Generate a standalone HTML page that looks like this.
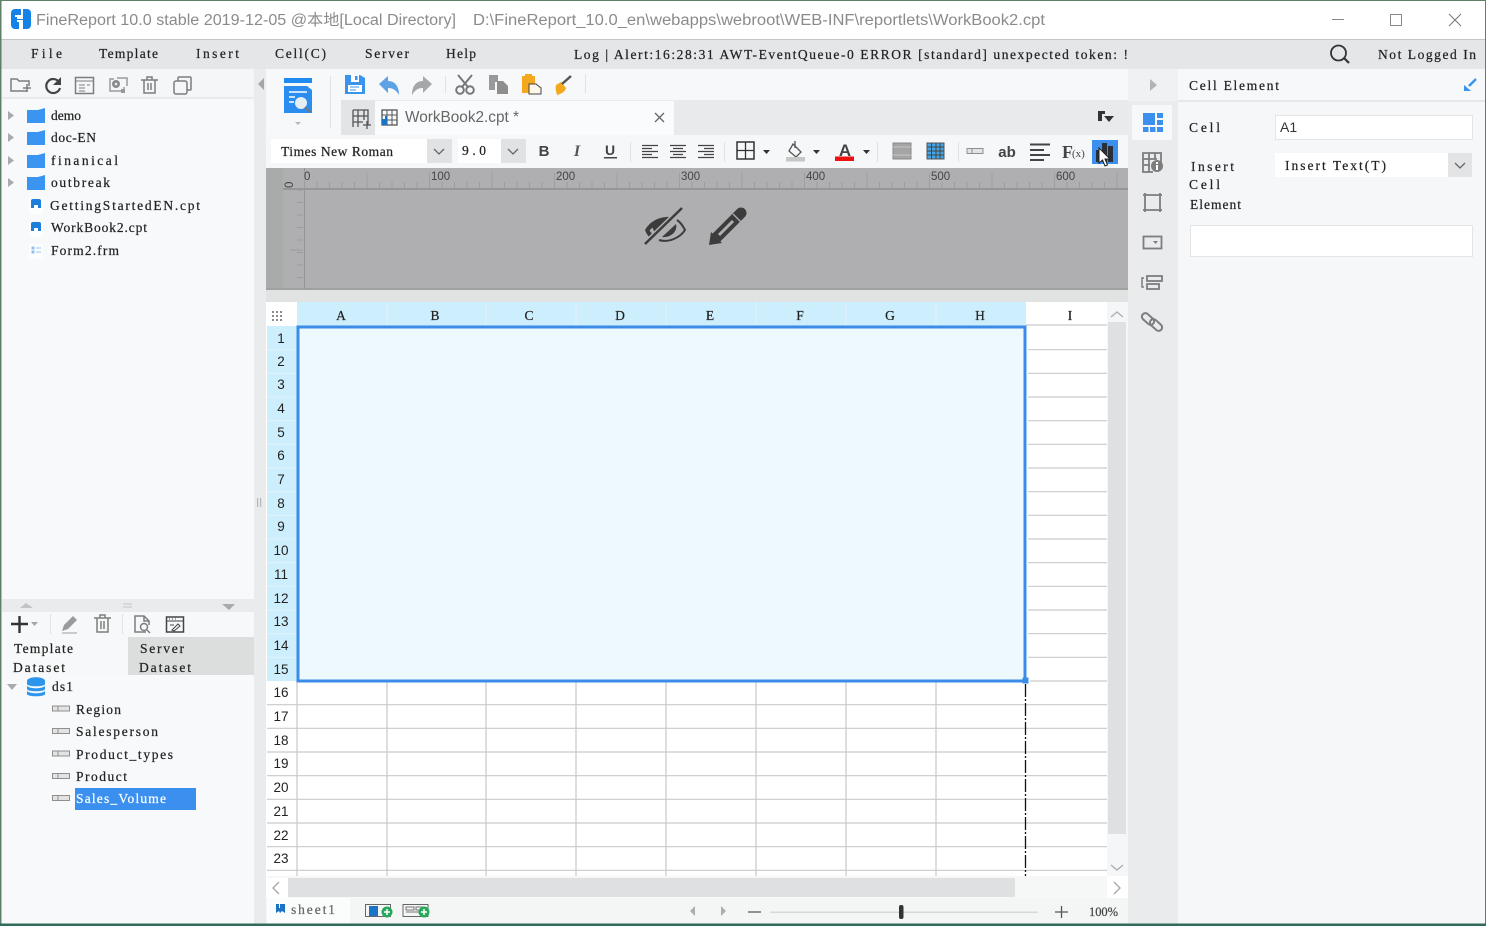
<!DOCTYPE html>
<html><head><meta charset="utf-8"><title>FineReport</title>
<style>
html,body{margin:0;padding:0;background:#fff;overflow:hidden}
svg{display:block}
text{font-family:"Liberation Serif","Noto Sans CJK SC",serif;font-size:13.5px;fill:#222;stroke:#222;stroke-width:.22px}
.s{font-family:"Liberation Sans","Noto Sans CJK SC",sans-serif;stroke:none}
.t{font-size:15.5px;fill:#8b8b8b}
.n{font-size:13.5px;fill:#222}
.r{font-size:11.5px;fill:#444}
.i{fill:none;stroke:#7d7d7d;stroke-width:1.5}
.d{fill:none;stroke:#444;stroke-width:1.5}
.g{stroke:#c9c9cc;stroke-width:1.2}
</style></head><body>
<svg width="1486" height="926" viewBox="0 0 1486 926" xmlns="http://www.w3.org/2000/svg">
<rect width="1486" height="926" fill="#fff"/>
<!-- menu -->
<rect x="1" y="39" width="1484" height="30" fill="#e5e6e8"/>
<rect x="1" y="39" width="1484" height="1" fill="#c4c5c6"/>
<!-- left panel -->
<rect x="2" y="69" width="252" height="856" fill="#f7f9fa"/>
<rect x="2" y="69" width="252" height="29" fill="#f5f6f8"/>
<rect x="2" y="97" width="252" height="2" fill="#e8e9ea"/>
<rect x="254" y="69" width="12" height="856" fill="#eaebed"/>
<!-- center -->
<rect x="266" y="69" width="862" height="31" fill="#f7f8fa"/>
<rect x="266" y="100" width="862" height="35" fill="#f7f8fa"/>
<rect x="341" y="100" width="787" height="35" fill="#e9eaec"/>
<rect x="341" y="100" width="34" height="35" fill="#e3e4e6"/>
<rect x="375" y="101" width="299" height="34" fill="#fafbfc"/>
<rect x="266" y="135" width="862" height="33" fill="#f6f7f9"/>
<rect x="266" y="168" width="862" height="121" fill="#afafb1"/>
<rect x="266" y="168" width="17" height="121" fill="#a9aaaa"/>
<rect x="266" y="288" width="862" height="2" fill="#a0a0a0"/>
<rect x="266" y="290" width="862" height="12" fill="#e1e2e2"/>
<rect x="304" y="168" width="1" height="121" fill="#959596"/>
<rect x="283" y="188" width="845" height="2" fill="#969697"/>
<!-- ruler ticks -->
<line x1="304" y1="185" x2="1128" y2="185" stroke="#9c9c9d" stroke-width="6" stroke-dasharray="1 11.5"/>
<line x1="304" y1="178" x2="1128" y2="178" stroke="#9f9fa0" stroke-width="10" stroke-dasharray="1 61.5"/>
<line x1="300" y1="190" x2="300" y2="288" stroke="#9c9c9d" stroke-width="6" stroke-dasharray="1 11.5" stroke-dashoffset="-12"/>
<line x1="290" y1="250" x2="303" y2="250" stroke="#9c9c9d" stroke-width="1"/>
<text x="304" y="180" class="s r">0</text><text x="431" y="180" class="s r">100</text><text x="556" y="180" class="s r">200</text><text x="681" y="180" class="s r">300</text><text x="806" y="180" class="s r">400</text><text x="931" y="180" class="s r">500</text><text x="1056" y="180" class="s r">600</text>
<text transform="translate(285,188) rotate(-90)" x="0" y="8" class="s r">0</text>
<!-- grid -->
<rect x="267" y="302" width="840" height="574" fill="#fff"/>
<rect x="297" y="302" width="729" height="24" fill="#cdeefc"/>
<rect x="267" y="326" width="30" height="355" fill="#cdeefc"/>
<rect x="297" y="326" width="729" height="355" fill="#eef9fe"/>
<g stroke="#e2f3fb" stroke-width="1"><path d="M387 302V326M486 302V326M576 302V326M666 302V326M756 302V326M846 302V326M936 302V326"/><path d="M267 349.7H297M267 373.3H297M267 397H297M267 420.7H297M267 444.3H297M267 468H297M267 491.7H297M267 515.3H297M267 539H297M267 562.7H297M267 586.3H297M267 610H297M267 633.7H297M267 657.3H297"/></g>
<path class="g" fill="none" d="M1028 349.7H1107M1028 373.3H1107M1028 397H1107M1028 420.7H1107M1028 444.3H1107M1028 468H1107M1028 491.7H1107M1028 515.3H1107M1028 539H1107M1028 562.7H1107M1028 586.3H1107M1028 610H1107M1028 633.7H1107M1028 657.3H1107M1026 325H1107"/>
<path class="g" fill="none" d="M267 704.7H1107M267 728.3H1107M267 752H1107M267 775.7H1107M267 799.3H1107M267 823H1107M267 846.7H1107M267 870.3H1107M1030 681H1107"/>
<path class="g" fill="none" d="M297 681V876M387 681V876M486 681V876M576 681V876M666 681V876M756 681V876M846 681V876M936 681V876"/>
<rect x="298" y="327" width="727" height="354" fill="none" stroke="#3a8ce8" stroke-width="3"/>
<rect x="1022.500" y="677.500" width="6" height="6" fill="#3a8ce8"/>
<line x1="1025.500" y1="684" x2="1025.500" y2="876" stroke="#111" stroke-width="1.300" stroke-dasharray="13 2 2 2"/>
<!-- corner dots -->
<g fill="#8c8c8c"><rect x="272" y="311" width="2" height="2"/><rect x="276" y="311" width="2" height="2"/><rect x="280" y="311" width="2" height="2"/><rect x="272" y="315" width="2" height="2"/><rect x="276" y="315" width="2" height="2"/><rect x="280" y="315" width="2" height="2"/><rect x="272" y="319" width="2" height="2"/><rect x="276" y="319" width="2" height="2"/><rect x="280" y="319" width="2" height="2"/></g>
<g text-anchor="middle">
<text x="341" y="320">A</text><text x="435" y="320">B</text><text x="529" y="320">C</text><text x="620" y="320">D</text><text x="710" y="320">E</text><text x="800" y="320">F</text><text x="890" y="320">G</text><text x="980" y="320">H</text><text x="1070" y="320">I</text>
<text class="s n" x="281" y="343">1</text><text class="s n" x="281" y="366">2</text><text class="s n" x="281" y="389">3</text><text class="s n" x="281" y="413">4</text><text class="s n" x="281" y="437">5</text><text class="s n" x="281" y="460">6</text><text class="s n" x="281" y="484">7</text><text class="s n" x="281" y="508">8</text><text class="s n" x="281" y="531">9</text><text class="s n" x="281" y="555">10</text><text class="s n" x="281" y="579">11</text><text class="s n" x="281" y="603">12</text><text class="s n" x="281" y="626">13</text><text class="s n" x="281" y="650">14</text><text class="s n" x="281" y="674">15</text><text class="s n" x="281" y="697">16</text><text class="s n" x="281" y="721">17</text><text class="s n" x="281" y="745">18</text><text class="s n" x="281" y="768">19</text><text class="s n" x="281" y="792">20</text><text class="s n" x="281" y="816">21</text><text class="s n" x="281" y="840">22</text><text class="s n" x="281" y="863">23</text>
</g>
<!-- scrollbars -->
<rect x="1107" y="302" width="21" height="574" fill="#f4f6f7"/>
<rect x="1108" y="322" width="18" height="512" fill="#dfe0e2"/>
<path d="M1111 317l6-5 6 5M1111 865l6 5 6-5" fill="none" stroke="#aeaeae" stroke-width="1.300"/>
<rect x="267" y="876" width="861" height="22" fill="#f6f7f7"/>
<rect x="267" y="878" width="21" height="20" fill="#fff"/>
<rect x="288" y="878" width="727" height="19" fill="#dfe0e2"/>
<rect x="1107" y="876" width="21" height="22" fill="#fff"/>
<path d="M279 882l-6 6 6 6M1114 882l6 6-6 6" fill="none" stroke="#a5a5a5" stroke-width="1.300"/>
<!-- bottom bar -->
<rect x="266" y="898" width="862" height="26" fill="#f4f6f6"/>
<rect x="267" y="898" width="83" height="26" fill="#fbfcfc"/>
<path d="M276 904h3v4h1v-4h5v9l-3-2-2 2-1-2-3 2z" fill="#1a73c5"/>
<text x="291" y="914" textLength="44" lengthAdjust="spacing" style="fill:#666;stroke:#666">sheet1</text>
<rect x="365.500" y="904.500" width="25" height="12" fill="none" stroke="#666"/>
<rect x="369" y="906" width="9" height="10" fill="#1a73c5"/>
<circle cx="387" cy="912" r="5.500" fill="#27a95b"/><path d="M384 912h6M387 909v6" stroke="#fff" stroke-width="1.500"/>
<rect x="403" y="904.500" width="25" height="12" fill="none" stroke="#666"/>
<path d="M406 907h8v3h-8zM416 907h7v3h-7zM406 912h17" fill="none" stroke="#777"/>
<circle cx="424" cy="912" r="5.500" fill="#27a95b"/><path d="M421 912h6M424 909v6" stroke="#fff" stroke-width="1.500"/>
<path d="M695 906v10l-5-5zM721 906v10l5-5z" fill="#adadad"/>
<path d="M748 912h13M1055 912h13M1061.500 906v12" stroke="#555" stroke-width="1.300"/>
<rect x="770" y="911.500" width="268" height="1.500" fill="#d8d8d8"/>
<rect x="899" y="905" width="4.500" height="14" rx="2" fill="#333"/>
<text x="1089" y="916" textLength="29" lengthAdjust="spacing" style="font-size:12.5px;fill:#444;stroke:#444">100%</text>
<!-- right -->
<rect x="1128" y="69" width="50" height="856" fill="#eaebed"/>
<rect x="1128" y="69" width="50" height="32" fill="#f0f1f3"/>
<rect x="1178" y="69" width="307" height="856" fill="#f5f7f8"/>
<rect x="1178" y="69" width="307" height="31" fill="#f7f8fa"/>
<rect x="1178" y="100" width="307" height="2" fill="#e6e7e9"/>
<rect x="1132" y="105" width="40" height="35" fill="#f6f8fa"/>
<path d="M1150 79v12l7-6z" fill="#b3b4b5"/>
<text x="1189" y="90" textLength="90" lengthAdjust="spacing">Cell Element</text>
<path d="M1476 79l-7 7" stroke="#3a93ec" stroke-width="2.500" fill="none"/><path d="M1464 85v6h7z" fill="#3a93ec"/>
<text x="1189" y="132" textLength="31" lengthAdjust="spacing">Cell</text>
<rect x="1275.500" y="115.500" width="197" height="24" fill="#fff" stroke="#e3e4e6"/>
<text x="1280" y="132" class="s" style="font-size:14px;fill:#333">A1</text>
<text x="1191" y="171" textLength="43" lengthAdjust="spacing">Insert</text>
<text x="1189" y="189" textLength="31" lengthAdjust="spacing">Cell</text>
<text x="1190" y="209" textLength="51" lengthAdjust="spacing">Element</text>
<rect x="1275" y="153" width="173" height="24" fill="#fff"/>
<rect x="1448" y="153" width="24" height="24" fill="#e3e4e6"/>
<path d="M1455 163l5 5 5-5" fill="none" stroke="#666" stroke-width="1.300"/>
<text x="1285" y="170" textLength="101" lengthAdjust="spacing">Insert Text(T)</text>
<rect x="1190.500" y="225.500" width="282" height="31" fill="#fff" stroke="#e3e4e6"/>
<!-- right strip icons -->
<g fill="#3a8fef"><rect x="1143" y="113" width="12" height="12"/><rect x="1157" y="113" width="6" height="5"/><rect x="1157" y="120" width="6" height="5"/><rect x="1143" y="127" width="5.500" height="5"/><rect x="1150" y="127" width="5.500" height="5"/><rect x="1157" y="127" width="6" height="5"/></g>
<path d="M1161 164v-11h-18v19h10M1143 159h14M1149 153v19M1155 153v6M1143 165h7" fill="none" stroke="#7d7d7d" stroke-width="1.800"/>
<circle cx="1157" cy="166" r="6" fill="#7d7d7d"/><rect x="1156" y="165" width="2" height="5" fill="#fff"/><rect x="1156" y="162" width="2" height="2" fill="#fff"/>
<path d="M1145 195h15v15h-15zM1143 195h19M1143 210h19M1145 193v19M1160 193v19" class="i" style="stroke-width:1.800"/>
<rect x="1143.500" y="236.500" width="18" height="12" class="i" style="stroke-width:1.800"/>
<path d="M1153 241h5l-2.500 3z" fill="#7d7d7d"/>
<rect x="1147" y="276" width="15" height="5" class="i" style="stroke-width:1.800"/><rect x="1147" y="284" width="12" height="5" class="i" style="stroke-width:1.800"/>
<path d="M1144 278h-2v9h2" class="i"/>
<rect x="1141" y="315.500" width="14" height="7" rx="3.500" transform="rotate(42 1148 319)" fill="none" stroke="#7d7d7d" stroke-width="2"/>
<rect x="1149" y="321.500" width="14" height="7" rx="3.500" transform="rotate(42 1156 325)" fill="none" stroke="#7d7d7d" stroke-width="2"/>
<!-- left toolbar -->
<path d="M27 91H11V79h6l2 2h10v5M27 84v8M23 88h8" class="i"/>
<path d="M59 82a7 7 0 1 0 1 6" fill="none" stroke="#444" stroke-width="2.200"/><path d="M61 77v8h-8z" fill="#444"/>
<rect x="75.500" y="77.500" width="18" height="16" class="i"/><path d="M75.500 81h18M79 85h6M79 88h6M79 91h6M87 85h3" class="i" style="stroke-width:1"/>
<path d="M114 79h-4v12h14v-4M117 78h10v8" class="i" style="stroke:#9a9a9a"/><circle cx="116" cy="84" r="4" fill="#8a8a8a"/><circle cx="116" cy="84" r="1.300" fill="#eee"/><rect x="121" y="89" width="4" height="4" fill="#999"/>
<path d="M141 80h17M144 80v13h11V80M147 80v-3h5v3M148 83v7M151 83v7" class="i"/>
<rect x="174" y="81" width="13" height="13" rx="2" class="i"/><path d="M178 81v-3a1 1 0 0 1 1-1h11a1 1 0 0 1 1 1v11a1 1 0 0 1-1 1h-3" class="i"/>
<path d="M264 78v12l-6-6z" fill="#a5a6a7"/>
<!-- tree -->
<g fill="#a9aaab"><path d="M8 111v9l6-4.500z"/><path d="M8 133v9l6-4.500z"/><path d="M8 156v9l6-4.500z"/><path d="M8 178v9l6-4.500z"/></g>
<g fill="#3a94f2"><path d="M27 110h9l2 0 7-2v15H27z"/><path d="M27 132h9l2 0 7-2v15H27z"/><path d="M27 155h9l2 0 7-2v15H27z"/><path d="M27 177h9l2 0 7-2v15H27z"/></g>
<text x="51" y="120" textLength="30" lengthAdjust="spacing">demo</text>
<text x="51" y="142" textLength="45" lengthAdjust="spacing">doc-EN</text>
<text x="51" y="165" textLength="67" lengthAdjust="spacing">finanical</text>
<text x="51" y="187" textLength="59" lengthAdjust="spacing">outbreak</text>
<rect x="29" y="199" width="14" height="15" fill="#fcfdfd"/><rect x="29" y="222" width="14" height="15" fill="#fcfdfd"/><rect x="29" y="244" width="14" height="15" fill="#fcfdfd"/>
<path d="M31 201a2 2 0 0 1 2-2h6a2 2 0 0 1 2 2v7h-3v-3h-4v3h-3z" fill="#1c7fdc"/><path d="M31 224a2 2 0 0 1 2-2h6a2 2 0 0 1 2 2v7h-3v-3h-4v3h-3z" fill="#1c7fdc"/>
<path d="M32 247h2v2h-2zM32 251h2v2h-2zM36 248h5M36 252h5" stroke="#9cc5ee" stroke-width="1" fill="#5da6ea"/>
<text x="50" y="210" textLength="150" lengthAdjust="spacing">GettingStartedEN.cpt</text>
<text x="51" y="232" textLength="96" lengthAdjust="spacing">WorkBook2.cpt</text>
<text x="51" y="255" textLength="68" lengthAdjust="spacing">Form2.frm</text>
<!-- splitter -->
<rect x="2" y="599" width="252" height="13" fill="#eaebed"/>
<path d="M20 608l6-5 7 5z" fill="#c3c4c5"/><path d="M222 604h13l-6 6z" fill="#a9aaab"/>
<path d="M123 604h9M123 607h9" stroke="#c3c4c5"/>
<rect x="257" y="498" width="1.200" height="9" fill="#b5b6b7"/><rect x="260" y="498" width="1.200" height="9" fill="#b5b6b7"/>
<!-- dataset toolbar -->
<rect x="2" y="612" width="252" height="25" fill="#f7f8fa"/>
<path d="M11 624h17M19.500 616v17" stroke="#333" stroke-width="2.400"/>
<path d="M31 622h7l-3.500 4z" fill="#a5a6a7"/>
<rect x="50" y="614" width="1" height="20" fill="#e3e4e6"/><rect x="122" y="614" width="1" height="20" fill="#e3e4e6"/>
<path d="M62 631l2-6 9-9 4 4-9 9z" fill="#9b9b9b"/><path d="M62 633h15" stroke="#9b9b9b"/>
<path d="M94 618h17M97 618v14h11v-14M100 618v-3h5v3M101 621v8M104 621v8" class="i"/>
<path d="M146 632h-11v-16h9l5 5v4M144 616v5h5" class="i"/><circle cx="144" cy="627" r="3.500" class="i"/><path d="M147 630l3 3" class="i"/>
<rect x="166.500" y="617" width="17" height="15" class="d"/><path d="M166 621h18M169 619h1M172 619h1M175 619h1" class="d" style="stroke-width:1"/><path d="M172 630l6-6 2 2-6 5zM170 625h4" class="d" style="stroke-width:1"/>
<!-- dataset tabs -->
<rect x="2" y="637" width="126" height="38" fill="#f7f8f9"/>
<rect x="128" y="637" width="126" height="38" fill="#dcdddd"/>
<text x="14" y="653" textLength="59" lengthAdjust="spacing">Template</text>
<text x="13" y="672" textLength="52" lengthAdjust="spacing">Dataset</text>
<text x="140" y="653" textLength="44" lengthAdjust="spacing">Server</text>
<text x="139" y="672" textLength="52" lengthAdjust="spacing">Dataset</text>
<path d="M7 684h10l-5 6z" fill="#a9aaab"/>
<path d="M27 681c0-5 18-5 18 0v3c0 3-18 3-18 0zM27 686c3 3 15 3 18 0v3c0 3-18 3-18 0zM27 691c3 3 15 3 18 0v3c0 3-18 3-18 0z" fill="#2e95ec"/>
<text x="52" y="691" textLength="21" lengthAdjust="spacing">ds1</text>
<g fill="#e3e3e3" stroke="#8f8f8f"><rect x="52.500" y="706" width="17" height="5"/><rect x="52.500" y="728.500" width="17" height="5"/><rect x="52.500" y="751" width="17" height="5"/><rect x="52.500" y="773.500" width="17" height="5"/><rect x="52.500" y="795.500" width="17" height="5"/></g>
<path d="M58 706v5M58 728.500v5M58 751v5M58 773.500v5M58 795.500v5" stroke="#8f8f8f"/>
<rect x="75" y="788" width="121" height="22" fill="#3a8fef"/>
<text x="76" y="714" textLength="45" lengthAdjust="spacing">Region</text>
<text x="76" y="736" textLength="82" lengthAdjust="spacing">Salesperson</text>
<text x="76" y="759" textLength="97" lengthAdjust="spacing">Product_types</text>
<text x="76" y="781" textLength="51" lengthAdjust="spacing">Product</text>
<text x="76" y="803" textLength="90" lengthAdjust="spacing" style="fill:#fff;stroke:#fff">Sales_Volume</text>
<!-- main toolbar -->
<rect x="284" y="78" width="28" height="5" fill="#1f8bf0"/>
<path d="M284 86h23l5 4v23h-28z" fill="#2b8df0"/>
<path d="M289 92h18M289 97h6M289 102h5" stroke="#fff" stroke-width="1.500"/>
<circle cx="301" cy="103" r="6" fill="#e6eef5"/><path d="M305 107l5 5" stroke="#777" stroke-width="2"/>
<path d="M295 122h6l-3 3z" fill="#b5b6b7"/>
<rect x="330" y="76" width="1" height="52" fill="#e1e2e4"/>
<path d="M345 75h15l5 3v16h-20z" fill="#3a94ee"/><rect x="351" y="75" width="8" height="7" fill="#fff"/><rect x="355" y="76" width="2.500" height="4" fill="#3a94ee"/><rect x="348" y="85" width="14" height="7" fill="#fff"/><path d="M350 87h9M350 90h6" stroke="#3a94ee"/>
<path d="M379 84l9-8v5c6 0 11 4 11 14-3-5-6-7-11-7v5z" fill="#5da2e4"/>
<path d="M432 84l-9-8v5c-6 0-11 4-11 14 3-5 6-7 11-7v5z" fill="#a6a7a8"/>
<rect x="445" y="76" width="1" height="17" fill="#e1e2e4"/>
<path d="M458 75l10 12M472 75l-10 12" stroke="#777" stroke-width="2"/><circle cx="460" cy="90" r="3.800" fill="none" stroke="#777" stroke-width="2"/><circle cx="470" cy="90" r="3.800" fill="none" stroke="#777" stroke-width="2"/>
<path d="M489 75h9v7h-3v8h-6z" fill="#999"/><path d="M497 81h6l5 5v8h-11z" fill="#8e8e8e"/>
<path d="M522 76h3v-2h7v2h3v8h-6v9h-7z" fill="#f3a81e"/><path d="M529 84h7l5 4v6h-12z" fill="#fdf8e8" stroke="#444"/>
<path d="M556 85l5-3 5 6c-1 4-5 6-9 7-1-4-2-7-1-10z" fill="#f3a81e"/><path d="M562 84l9-8" stroke="#555" stroke-width="2.500"/>
<rect x="585" y="74" width="1" height="19" fill="#e1e2e4"/>
<!-- tab -->
<path d="M353 110h15v15M353 116h15M353 122h10M358 110v17M353 110v17M364 110v10M363 125h8M367 121v8" fill="none" stroke="#555" stroke-width="1.300"/>
<rect x="382" y="110" width="15" height="15" fill="none" stroke="#555" stroke-width="1.300"/><path d="M382 115h15M382 120h15M387 110v15M392 110v15" stroke="#555" fill="none"/><path d="M382 119h3v-3h2v9h-5z" fill="#1a73c5"/>
<text x="405" y="122" class="s" style="font-size:15.500px;fill:#666" textLength="114" lengthAdjust="spacingAndGlyphs">WorkBook2.cpt *</text>
<path d="M655 113l9 9M664 113l-9 9" stroke="#666" stroke-width="1.300"/>
<path d="M1098 111h7v3h-3v7h-4z" fill="#333"/><path d="M1104 116h10l-5 6z" fill="#333"/>
<!-- format bar -->
<rect x="271" y="139" width="156" height="24" fill="#fff"/>
<rect x="427" y="139" width="25" height="24" fill="#e1e2e4"/>
<text x="281" y="156" textLength="112" lengthAdjust="spacing">Times New Roman</text>
<path d="M434 149l5 5 5-5" fill="none" stroke="#666" stroke-width="1.300"/>
<rect x="458" y="139" width="43" height="24" fill="#fff"/>
<rect x="501" y="139" width="25" height="24" fill="#e1e2e4"/>
<text x="462" y="155" textLength="24" lengthAdjust="spacing">9.0</text>
<path d="M508 149l5 5 5-5" fill="none" stroke="#666" stroke-width="1.300"/>
<text x="544" y="156" class="s" text-anchor="middle" style="font-size:15px;font-weight:bold;fill:#444">B</text>
<text x="577" y="156" text-anchor="middle" style="font-size:16px;font-style:italic;font-weight:bold;fill:#555;stroke:none">I</text>
<text x="610" y="155" class="s" text-anchor="middle" style="font-size:14px;font-weight:bold;fill:#444">U</text>
<rect x="604" y="157" width="13" height="1.500" fill="#444"/>
<rect x="630" y="142" width="1" height="20" fill="#e1e2e4"/>
<path d="M642 145.500h16M642 148.500h10M642 151.500h16M642 154.500h10M642 157.500h16M670 145.500h16M673 148.500h10M670 151.500h16M673 154.500h10M670 157.500h16M698 145.500h16M704 148.500h10M698 151.500h16M704 154.500h10M698 157.500h16" stroke="#444" stroke-width="1.200"/>
<rect x="724" y="142" width="1" height="20" fill="#e1e2e4"/>
<rect x="737" y="142" width="17" height="17" fill="none" stroke="#333" stroke-width="1.500"/><path d="M745.500 142v17M737 150.500h17" stroke="#333" stroke-width="1.300"/>
<path d="M763 150h7l-3.500 4zM813 150h7l-3.500 4zM863 150h7l-3.500 4z" fill="#333"/>
<path d="M793 144l8 8-5 5-7-6zM795 141v7" fill="none" stroke="#555" stroke-width="1.300"/><rect x="786" y="157" width="19" height="4.500" fill="#c7c7c7"/>
<text x="845" y="156" class="s" text-anchor="middle" style="font-size:17px;font-weight:bold;fill:#444">A</text>
<rect x="835" y="156.500" width="19" height="4.500" fill="#ee1111"/>
<rect x="877" y="142" width="1" height="20" fill="#e1e2e4"/>
<rect x="893" y="143" width="18" height="16" fill="#a5a5a5" stroke="#888"/><path d="M893 147h18M893 155h18" stroke="#c8c8c8"/>
<rect x="927" y="143" width="17" height="16" fill="#44a6e4" stroke="#555"/><path d="M927 147h17M927 151h17M927 155h17M931.500 143v16M936 143v16M940 143v16" stroke="#444"/>
<rect x="958" y="142" width="1" height="20" fill="#e1e2e4"/>
<rect x="967" y="148.500" width="16" height="5" fill="#e3e3e3" stroke="#8f8f8f"/><path d="M972 148.500v5" stroke="#8f8f8f"/>
<text x="1007" y="157" class="s" text-anchor="middle" style="font-size:15px;font-weight:bold;fill:#444">ab</text>
<path d="M1030 144.500h20M1030 150h14M1030 155h20M1030 160h14" stroke="#444" stroke-width="2"/>
<text x="1062" y="158" style="font-size:18px;fill:#444;stroke:none;font-weight:bold">F</text><text x="1072" y="157" style="font-size:11px;fill:#444;stroke:none">(x)</text>
<rect x="1092" y="140" width="26" height="24" fill="#3a8fef"/>
<path d="M1096 150h5v12h-5zM1102 143h5v19h-5zM1108 146h5v16h-5z" fill="#2a2f38"/>
<path d="M1099 148v15l3.500-3 2.500 6 2.500-1-2.500-6h5z" fill="#fff" stroke="#222" stroke-width="1"/>
<!-- eye + pencil -->
<path d="M645 230C650 221 660 216 672 217L650 238C648 236 646 233 645 230Z" fill="#3c3c3c"/>
<path d="M649.500 230.500l3-3 2 5-2 2z" fill="#afafb1"/>
<path d="M677 220C680 222 683 226 685 230C680 238 668 243 659 240" fill="none" stroke="#3c3c3c" stroke-width="2"/>
<path d="M662 237L676 224C678 232 670 238 662 237Z" fill="#3c3c3c"/>
<path d="M645 244L682 208" stroke="#afafb1" stroke-width="5.500"/>
<path d="M645 244L682 208" stroke="#3c3c3c" stroke-width="2.500"/>
<path d="M709 245L711 232L722 243Z" fill="#3c3c3c"/>
<path d="M716 238L741 213" stroke="#3c3c3c" stroke-width="11" stroke-linecap="round"/>
<path d="M719 235L733 221" stroke="#afafb1" stroke-width="3"/>
<path d="M733 214L741 222" stroke="#afafb1" stroke-width="1.300"/>
<!-- menu text -->
<text x="31" y="58" textLength="31" lengthAdjust="spacing">File</text>
<text x="99" y="58" textLength="59" lengthAdjust="spacing">Template</text>
<text x="196" y="58" textLength="43" lengthAdjust="spacing">Insert</text>
<text x="275" y="58" textLength="51" lengthAdjust="spacing">Cell(C)</text>
<text x="365" y="58" textLength="44" lengthAdjust="spacing">Server</text>
<text x="446" y="58" textLength="30" lengthAdjust="spacing">Help</text>
<text x="574" y="59" textLength="554" lengthAdjust="spacing">Log | Alert:16:28:31 AWT-EventQueue-0 ERROR [standard] unexpected token: !</text>
<circle cx="1338.500" cy="53" r="7.500" fill="none" stroke="#333" stroke-width="1.800"/><path d="M1344 58l5 5" stroke="#333" stroke-width="2.200"/>
<text x="1378" y="59" textLength="98" lengthAdjust="spacing">Not Logged In</text>
<!-- title -->
<rect x="11" y="9" width="20" height="20" rx="4" fill="#1482e6"/>
<path d="M21 9h2v10h-6v-2h4zM15 15h6v2h-6zM17 20h6v9h-4v-7h-2z" fill="#fff"/>
<text x="36" y="25" class="s t" textLength="420" lengthAdjust="spacingAndGlyphs">FineReport 10.0 stable 2019-12-05 @本地[Local Directory]</text>
<text x="473" y="25" class="s t" textLength="572" lengthAdjust="spacingAndGlyphs">D:\FineReport_10.0_en\webapps\webroot\WEB-INF\reportlets\WorkBook2.cpt</text>
<path d="M1332 19.500h12" stroke="#888" stroke-width="1"/>
<rect x="1390.500" y="14.500" width="11" height="11" fill="none" stroke="#888"/>
<path d="M1449 14l12 12M1461 14l-12 12" stroke="#777" stroke-width="1"/>
<!-- window border -->
<rect x="0" y="0" width="1486" height="1" fill="#5e7f68"/>
<rect x="0" y="0" width="1.500" height="926" fill="#5e7f68"/>
<rect x="1485" y="0" width="1" height="926" fill="#5e7f68"/>
<rect x="0" y="923.500" width="1486" height="2.500" fill="#2f6a5a"/>
</svg>
</body></html>
